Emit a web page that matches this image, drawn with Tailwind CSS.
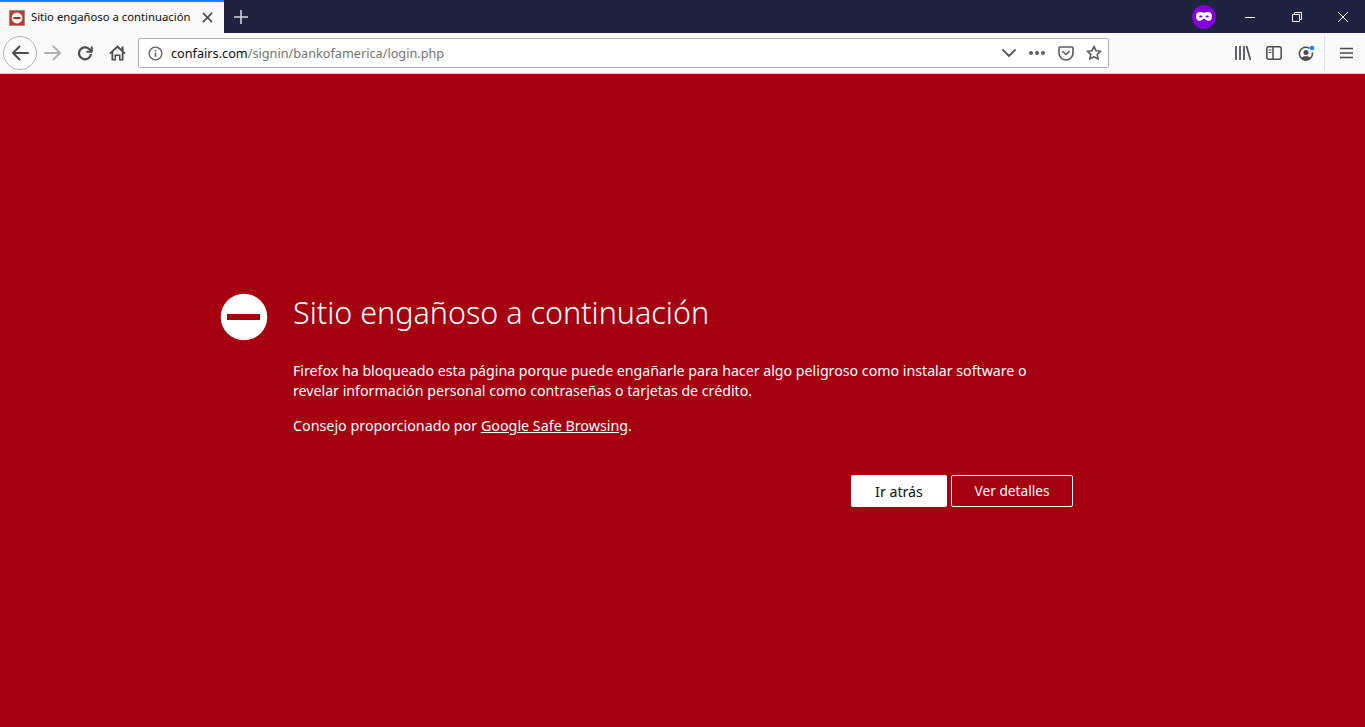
<!DOCTYPE html>
<html lang="es">
<head>
    <meta charset="UTF-8">
    <title>Sitio engañoso a continuación</title>
    <script src="https://cdn.jsdelivr.net/npm/@tailwindcss/browser@4"></script>
</head>
<body class="h-screen flex flex-col overflow-hidden bg-[#a4000f] font-['Noto_Sans','Open_Sans',sans-serif]">
    <!-- tab strip -->
    <div class="h-[33px] bg-[#202340] flex items-stretch shrink-0">
        <div class="w-[224px] bg-[#f9f9fa] border-t-2 border-[#0a84ff] flex items-center pl-[9px] pr-[11px]">
            <svg width="16" height="16" viewBox="0 0 16 16" class="shrink-0">
                <rect x="0.500" y="0.500" width="15" height="15" fill="#c0392b" stroke="#8d8d8d"/>
                <circle cx="8" cy="8" r="5.400" fill="#fff"/>
                <rect x="4.500" y="7" width="7" height="2" fill="#b1251c"/>
            </svg>
            <span class="ml-[6px] text-[11.300px] text-[#0c0c0d] whitespace-nowrap flex-1">Sitio engañoso a continuación</span>
            <svg width="11" height="11" viewBox="0 0 12 12" class="shrink-0" fill="none" stroke="#4a4a4f" stroke-width="1.700">
                <path d="M1 1l10 10M11 1L1 11"/>
            </svg>
        </div>
        <div class="w-[34px] flex items-center justify-center">
            <svg width="14" height="14" viewBox="0 0 14 14" stroke="#d2d3da" stroke-width="1.600"><path d="M7 0v14M0 7h14"/></svg>
        </div>
        <div class="flex-1"></div>
        <div class="flex items-center">
            <div class="w-[24px] h-[24px] rounded-full bg-[#8000d7] flex items-center justify-center mr-[11px]">
                <svg width="16" height="9" viewBox="0 0 16 9"><path fill="#fff" fill-rule="evenodd" d="M4 0C1.700 0 0 1.300 0 4.200 0 7 1.600 9 3.800 9 5.800 9 6.500 6.800 8 6.800S10.200 9 12.200 9C14.400 9 16 7 16 4.200 16 1.300 14.300 0 12 0 10.500 0 9.500.7 8 .7S5.500 0 4 0zM4.500 3.500C5.500 3.500 6.500 3.900 6.500 4.500 6.500 5.100 5.500 5.500 4.700 5.500 3.800 5.500 3.200 5 3.200 4.400 3.200 3.800 3.700 3.500 4.500 3.500zM11.500 3.500C12.300 3.500 12.800 3.800 12.800 4.400 12.800 5 12.200 5.500 11.300 5.500 10.500 5.500 9.500 5.100 9.500 4.500 9.500 3.900 10.500 3.500 11.500 3.500z"/></svg>
            </div>
            <div class="w-[46px] flex justify-center">
                <svg width="10" height="10" viewBox="0 0 10 10" stroke="#fff"><path d="M0 5.500h10"/></svg>
            </div>
            <div class="w-[48px] flex justify-center">
                <svg width="10" height="10" viewBox="0 0 10 10" fill="none" stroke="#fff"><path d="M.5 2.500h7v7h-7zM2.500 2.500v-2h7v7h-2"/></svg>
            </div>
            <div class="w-[44px] flex justify-center">
                <svg width="10" height="10" viewBox="0 0 10 10" fill="none" stroke="#fff"><path d="M0 0l10 10M10 0L0 10"/></svg>
            </div>
        </div>
    </div>

    <!-- toolbar -->
    <div class="h-[41px] bg-[#f9f9fa] border-b border-[#cccccc] flex items-center shrink-0">
        <div class="w-[34px] h-[34px] ml-[3px] rounded-full border border-[#b1b1b3] bg-[#fbfbfb] flex items-center justify-center">
            <svg width="18" height="16" viewBox="0 0 18 16" fill="none" stroke="#4a4a4f" stroke-width="2" stroke-linecap="round" stroke-linejoin="round"><path d="M2 8h15M8.500 1.500L2 8l6.500 6.500"/></svg>
        </div>
        <svg class="ml-[7px]" width="18" height="16" viewBox="0 0 18 16" fill="none" stroke="#b1b1b3" stroke-width="2" stroke-linecap="round" stroke-linejoin="round"><path d="M1 8h15M9.500 1.500L16 8l-6.500 6.500"/></svg>
        <svg class="ml-[15px]" width="16" height="16" viewBox="0 0 16 16" fill="none" stroke="#4a4a4f" stroke-width="2.200" stroke-linejoin="round"><path d="M14 9a6 6 0 1 1-1.800-5L14.500 6"/><path d="M14.800 1.500V6.800H9.500" stroke-width="2"/></svg>
        <svg class="ml-[16px]" width="17" height="16" viewBox="0 0 17 16"><path fill="#4a4a4f" fill-rule="evenodd" d="M8.500.3L.3 8l1.100 1.200L2.500 8.300V15.500h4.500V11h3v4.500h4.500V8.300l1.100.9L16.700 8l-2.200-2V1.500h-2v2.600zM4.200 14V6.800L8.500 3l4.300 3.800V14h-1.300V9.500h-6V14z"/></svg>

        <div class="ml-[12px] w-[971px] h-[30px] bg-white border border-[#b1b1b3] rounded-[2px] flex items-center pl-[9px] pr-[6px]">
            <svg width="15" height="15" viewBox="0 0 16 16" fill="none" class="shrink-0">
                <circle cx="8" cy="8" r="6.800" stroke="#5c5c61" stroke-width="1.400"/>
                <rect x="7.200" y="7" width="1.600" height="4.500" fill="#5c5c61"/>
                <rect x="7.200" y="4.200" width="1.600" height="1.600" fill="#5c5c61"/>
            </svg>
            <span class="ml-[8px] mt-[2px] text-[12.700px] text-[#0c0c0d] whitespace-nowrap flex-1">confairs.com<span class="text-[#737373]">/signin/bankofamerica/login.php</span></span>
            <svg class="ml-[1px]" width="14" height="8" viewBox="0 0 14 8" fill="none" stroke="#5c5c61" stroke-width="1.800" stroke-linecap="round" stroke-linejoin="round"><path d="M1 1l6 6 6-6"/></svg>
            <svg class="ml-[13px]" width="16" height="4" viewBox="0 0 16 4" fill="#5c5c61"><circle cx="2" cy="2" r="2"/><circle cx="8" cy="2" r="2"/><circle cx="14" cy="2" r="2"/></svg>
            <svg class="ml-[13px]" width="16" height="15" viewBox="0 0 16 15" fill="none" stroke="#5c5c61" stroke-width="1.600" stroke-linejoin="round" stroke-linecap="round"><path d="M2 1h12a1 1 0 0 1 1 1v5a7 7 0 0 1-14 0V2a1 1 0 0 1 1-1z"/><path d="M4.800 5.500L8 8.500l3.200-3"/></svg>
            <svg class="ml-[12px]" width="16" height="16" viewBox="0 0 16 16" fill="none" stroke="#5c5c61" stroke-width="1.600" stroke-linejoin="round"><path d="M8 1.300l2 4.400 4.800.5-3.600 3.200 1 4.700L8 11.700l-4.200 2.400 1-4.700L1.200 6.200 6 5.700z"/></svg>
        </div>

        <div class="flex-1"></div>
        <svg width="16" height="14" viewBox="0 0 16 14" fill="none" stroke="#4a4a4f" stroke-width="1.700" class="mr-[15px]"><path d="M1 0v14M5 0v14M9 0v14M11.500 0l4 14"/></svg>
        <svg width="16" height="14" viewBox="0 0 16 14" fill="none" stroke="#4a4a4f" stroke-width="1.500" class="mr-[16px]"><rect x="0.800" y="0.800" width="14.400" height="12.400" rx="2"/><path d="M7 1v12"/><path d="M2.500 4h3M2.500 6.500h3" stroke-width="1.200"/></svg>
        <svg width="17" height="17" viewBox="0 0 17 17" fill="none" class="mr-[9px]">
            <path d="M11.500 3.300A6.500 6.500 0 1 0 14.300 7.500" stroke="#4a4a4f" stroke-width="1.500"/>
            <circle cx="8" cy="7.500" r="2.500" fill="#4a4a4f"/>
            <path d="M3.500 13c1-2.500 8-2.500 9 0a6 6 0 0 1-9 0z" fill="#4a4a4f"/>
            <circle cx="14" cy="3" r="2.300" fill="#0a84ff"/>
        </svg>
        <div class="w-px h-[34px] bg-[#dcdcdd] mr-[15px]"></div>
        <svg width="13" height="12" viewBox="0 0 13 12" stroke="#4a4a4f" stroke-width="1.700" class="mr-[12px]"><path d="M0 1.500h13M0 6h13M0 10.500h13"/></svg>
    </div>

    <!-- error page -->
    <main class="flex-1 text-white pt-[220px] pl-[220px]">
        <div class="w-[853px]">
            <div class="flex items-start">
                <svg width="48" height="48" viewBox="0 0 48 48" class="shrink-0 mt-[-1px]">
                    <circle cx="24" cy="24" r="23.300" fill="#fff"/>
                    <rect x="7" y="21" width="33" height="6" fill="#a4000f"/>
                </svg>
                <div class="ml-[25px] flex-1">
                    <h1 class="text-[30.500px] font-light leading-[40px] whitespace-nowrap mt-[-2px]">Sitio engañoso a continuación</h1>
                    <p class="mt-[29px] text-[14.200px] leading-[20px] w-[760px]">Firefox ha bloqueado esta página porque puede engañarle para hacer algo peligroso como instalar software o revelar información personal como contraseñas o tarjetas de crédito.</p>
                    <p class="mt-[15px] text-[14.300px] leading-[20px]">Consejo proporcionado por <a href="#" class="underline">Google Safe Browsing</a>.</p>
                </div>
            </div>
            <div class="flex justify-end gap-[4px] mt-[39px]">
                <button class="w-[96px] h-[32px] pt-px bg-white text-[#0c0c0d] text-[14.200px] rounded-[2px]">Ir atrás</button>
                <button class="w-[122px] h-[32px] pt-px border border-white text-white text-[13.700px] rounded-[2px]">Ver detalles</button>
            </div>
        </div>
    </main>
</body>
</html>
